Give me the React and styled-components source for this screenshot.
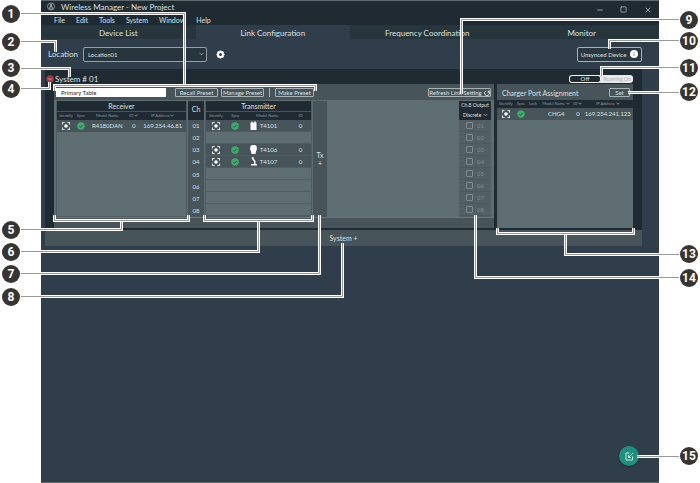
import React from 'react';
import styled, { createGlobalStyle, css } from 'styled-components';
import { ChevronDown, Minus, Square, X } from 'lucide-react';

const colors = {
  body: '#303e4b',
  dark: '#1f2a32',
  tab: '#27363c',
  panel: '#475459',
  field: '#5e6d71',
  line: '#4f5d62',
  edge: '#5c696d',
  text: '#dbe0e2',
  muted: '#909b9f',
  dim: '#7f8c91',
  ok: '#3dab6b',
  danger: '#a23c40',
  accent: '#1f9080',
  badge: '#383431',
};

const GlobalStyle = createGlobalStyle`
  * {
    box-sizing: border-box;
  }

  body {
    margin: 0;
    background: #fff;
    font-family: Lato, 'Noto Sans', sans-serif;
    color: ${colors.text};
  }

  button, input, select {
    font-family: inherit;
    color: inherit;
    margin: 0;
  }
`;

const Page = styled.div`
  position: relative;
  min-height: 100vh;
  display: flex;
  padding: 0 41px;
`;

const Window = styled.main`
  position: relative;
  flex: 1;
  min-width: 0;
  background: ${colors.body};
  border-top: 1px solid ${colors.edge};
  border-bottom: 1px solid ${colors.edge};
`;

const TitleBar = styled.header`
  display: flex;
  align-items: flex-start;
  height: 13px;
  padding: 1px 7px 0 6px;
  background: ${colors.dark};
`;

const AppTitle = styled.h1`
  flex: 1;
  margin: 0 0 0 6px;
  font-size: 8px;
  line-height: 10px;
  font-weight: 400;
`;

const WindowControls = styled.div`
  display: flex;
  align-items: flex-end;
  gap: 16px;
  height: 12px;
`;

const WindowButton = styled.button`
  display: flex;
  width: 8px;
  height: 8px;
  padding: 0;
  border: 0;
  background: none;
`;

const MenuBar = styled.nav`
  display: flex;
  gap: 11px;
  height: 11px;
  padding-left: 13px;
  background: ${colors.dark};
`;

const MenuItem = styled.a`
  font-size: 7px;
  line-height: 12px;
  color: inherit;
  text-decoration: none;
`;

const Tabs = styled.nav`
  display: grid;
  grid-template-columns: repeat(4, 1fr);
  background: ${colors.tab};
`;

const Tab = styled.a`
  height: 14px;
  font-size: 8px;
  line-height: 16px;
  text-align: center;
  color: inherit;
  text-decoration: none;
  background: ${({ $active }) => ($active ? colors.body : 'transparent')};
`;

const LocationBar = styled.div`
  display: flex;
  align-items: center;
  height: 30px;
  padding: 0 17px 0 7px;
`;

const LocationLabel = styled.label`
  width: 35px;
  font-size: 8px;
`;

const SelectWrap = styled.div`
  position: relative;
  width: ${({ $width }) => $width};

  svg {
    position: absolute;
    right: ${({ $inset }) => $inset};
    top: 50%;
    transform: translateY(-50%);
    pointer-events: none;
  }
`;

const LocationSelect = styled.select`
  display: block;
  appearance: none;
  width: 100%;
  height: 15px;
  padding: 0 4px;
  font-size: 6px;
  background: ${colors.tab};
  border: 1px solid #97a1a5;
  border-radius: 2px;
`;

const IconButton = styled.button`
  display: flex;
  margin-left: 9px;
  padding: 0;
  border: 0;
  background: none;
`;

const OutlineButton = styled.button`
  display: flex;
  align-items: center;
  justify-content: center;
  gap: 2px;
  width: ${({ $width }) => $width};
  height: 9px;
  padding: 0;
  font-size: 6px;
  line-height: 7px;
  white-space: nowrap;
  background: transparent;
  border: 1px solid #a9b1b4;
  border-radius: 1px;
  ${({ $tall }) =>
    $tall &&
    css`
      gap: 4px;
      height: 15px;
      margin-left: auto;
      background: #293740;
      border-radius: 2px;
    `}
`;

const System = styled.section`
  margin: 0 17px 0 4px;
  padding: 0 9px 2px;
  background: ${colors.dark};
`;

const SystemHeader = styled.div`
  display: flex;
  align-items: center;
  height: 15px;
  margin-left: -9px;
  padding-top: 5px;
`;

const SystemName = styled.h2`
  flex: 1;
  margin: 0;
  font-size: 8px;
  line-height: 10px;
  font-weight: 400;
`;

const RemoveButton = styled.button`
  display: flex;
  width: 10px;
  padding: 0 1px;
  border: 0;
  background: none;
`;

const Switch = styled.button`
  display: grid;
  grid-template-columns: 1fr 1fr;
  width: 64px;
  height: 8px;
  padding: 0;
  overflow: hidden;
  font-size: 6px;
  line-height: 6px;
  white-space: nowrap;
  border: 0;
  border-radius: 3px;
  background: #e9e8e8;
  color: #b0b0b0;
`;

const SwitchOff = styled.span`
  border: 1px solid #f1f1f1;
  border-radius: 3px;
  background: ${colors.dark};
  color: ${colors.text};
`;

const SwitchOn = styled.span`
  font-size: 5px;
  line-height: 8px;
`;

const Panels = styled.div`
  display: flex;
  gap: 3px;
  height: 144px;
`;

const LinkPanel = styled.div`
  flex: 1;
  min-width: 0;
  background: ${colors.panel};
`;

const Toolbar = styled.div`
  display: flex;
  align-items: center;
  gap: 3px;
  height: 16px;
  padding: 1px 3px 0 2px;
`;

const TableName = styled.input`
  width: 110px;
  height: 9px;
  margin-right: 6px;
  padding: 0 5px;
  border: 0;
  font-size: 6px;
  background: #fff;
  color: #222;
`;

const Divider = styled.span`
  width: 1px;
  height: 9px;
  margin: 0 2px;
  background: #a9b1b4;
`;

const Spacer = styled.span`
  flex: 1;
`;

const LinkGrid = styled.div`
  display: grid;
  grid-template-columns: 131fr 16px 107fr 14px 130fr 32px;
  gap: 1px;
  height: 118px;
  padding: 1px 3px 1px 2px;
  background: ${colors.field};
  border-bottom: 1px solid #6b797d;
`;

const DataTable = styled.table`
  width: 100%;
  table-layout: fixed;
  border-collapse: separate;
  border-spacing: 0;
  text-align: center;
  font-size: 6px;
  line-height: 8px;

  th, td {
    padding: 0;
    white-space: nowrap;
  }

  svg {
    vertical-align: middle;
  }
`;

const GroupHead = styled.th`
  height: 11px;
  font-size: 7px;
  font-weight: 400;
  background: ${colors.dark};
  border-bottom: 1px solid ${colors.panel};
`;

const ColumnHead = styled.th`
  height: 8px;
  font-size: 4px;
  line-height: 6px;
  font-weight: 400;
  color: ${colors.muted};
  background: ${colors.dark};
`;

const Row = styled.tr`
  height: 12px;
  background: ${({ $empty }) => ($empty ? 'transparent' : colors.panel)};

  td {
    border-bottom: ${({ $ruled }) => ($ruled ? `1px solid ${colors.line}` : '0')};
  }
`;

const ModelCell = styled.div`
  display: flex;
  align-items: center;
  gap: 3px;
  padding-left: 5px;
`;

const Frame = styled.div`
  border: solid ${colors.line};
  border-width: 0 1px 1px;
`;

const ChannelTable = styled(DataTable)`
  background: ${colors.panel};
`;

const ChannelHead = styled.th`
  && {
    height: 19px;
    padding-bottom: 4px;
    font-size: 7px;
    font-weight: 400;
    background: ${colors.dark};
  }
`;

const AddTransmitter = styled.button`
  display: flex;
  flex-direction: column;
  align-items: center;
  justify-content: center;
  padding: 0;
  border: 0;
  font-size: 7px;
  line-height: 8px;
  background: ${colors.panel};
`;

const Output = styled.div`
  background: #526065;
`;

const OutputHead = styled.div`
  height: 19px;
  text-align: center;
  font-size: 5px;
  line-height: 9px;
  white-space: nowrap;
  background: ${colors.dark};
`;

const OutputSelect = styled.select`
  display: block;
  appearance: none;
  width: 100%;
  height: 9px;
  padding: 0 4px;
  font-size: 5px;
  border: 0;
  background: transparent;
`;

const OutputRow = styled.label`
  display: flex;
  align-items: center;
  gap: 4px;
  height: 12px;
  padding-left: 7px;
  font-size: 6px;
  color: ${colors.dim};
  border-bottom: 1px solid #4b595e;

  input {
    appearance: none;
    width: 7px;
    height: 7px;
    border: 1px solid ${colors.dim};
    border-radius: 1px;
  }
`;

const ChargerPanel = styled.section`
  width: 136px;
  background: ${colors.field};
`;

const ChargerHeader = styled.div`
  display: flex;
  align-items: center;
  justify-content: space-between;
  height: 16px;
  padding: 1px 3px 0 5px;
  background: ${colors.panel};
`;

const ChargerTitle = styled.h3`
  margin: 0;
  font-size: 7px;
  font-weight: 400;
`;

const AddSystem = styled.button`
  display: block;
  width: calc(100% - 21px);
  height: 16px;
  margin-left: 4px;
  padding: 0;
  border: 0;
  font-size: 7px;
  text-align: center;
  background: ${colors.panel};
`;

const EditFab = styled.button`
  position: absolute;
  right: 20px;
  bottom: 16px;
  display: flex;
  align-items: center;
  justify-content: center;
  width: 20px;
  height: 20px;
  padding: 0;
  border: 0;
  border-radius: 50%;
  background: ${colors.accent};
  box-shadow: 0 1px 2px rgba(0, 0, 0, 0.4);
`;

const Leaders = styled.svg`
  position: absolute;
  top: 0;
  left: 0;
  pointer-events: none;
`;

const Badge = styled.span`
  position: absolute;
  top: ${({ $y }) => $y - 9}px;
  ${({ $side }) => $side}: 2px;
  width: 18px;
  height: 18px;
  border-radius: 50%;
  background: ${colors.badge};
  color: #fff;
  font: 700 12px/18px Roboto, sans-serif;
  text-align: center;
`;

const menus = ['File', 'Edit', 'Tools', 'System', 'Window', 'Help'];
const tabs = ['Device List', 'Link Configuration', 'Frequency Coordination', 'Monitor'];
const channels = ['01', '02', '03', '04', '05', '06', '07', '08'];

const transmitters = {
  '01': { model: 'T4101', kind: 'bodypack' },
  '03': { model: 'T4106', kind: 'boundary' },
  '04': { model: 'T4107', kind: 'gooseneck' },
};

const callouts = [
  { n: 1, y: 14, side: 'left', path: 'M21 13.5H184.5V85', bracket: 'M54.5 91V85.5H315.5V91' },
  { n: 2, y: 42, side: 'left', path: 'M21 41.5H55.5V52' },
  { n: 3, y: 68, side: 'left', path: 'M21 68.5H69.5V77' },
  { n: 4, y: 89, side: 'left', path: 'M21 88.5H49.5V82' },
  { n: 5, y: 230, side: 'left', path: 'M21 229.5H121.5V221', bracket: 'M54.5 215V220.5H188.5V215' },
  { n: 6, y: 252, side: 'left', path: 'M21 251.5H258.5V221', bracket: 'M204.5 215V220.5H312.5V215' },
  { n: 7, y: 274, side: 'left', path: 'M21 273.5H319.5V215' },
  { n: 8, y: 297, side: 'left', path: 'M21 296.5H342.5V243' },
  { n: 9, y: 20, side: 'right', path: 'M679 19.5H461.5V94' },
  { n: 10, y: 41, side: 'right', path: 'M679 40.5H609.5V49' },
  { n: 11, y: 68, side: 'right', path: 'M679 67.5H601.5V76' },
  { n: 12, y: 92, side: 'right', path: 'M679 92.5H628' },
  { n: 13, y: 254, side: 'right', path: 'M679 254.5H565.5V234', bracket: 'M497.5 228V233.5H633.5V228' },
  { n: 14, y: 278, side: 'right', path: 'M679 277.5H475.5V215' },
  { n: 15, y: 456, side: 'right', path: 'M679 456.5H637' },
];

const Logo = () => (
  <svg width="8" height="9" viewBox="0 0 16 18" fill="none" stroke="#aeb7ba" strokeWidth="1.4">
    <circle cx="8" cy="9" r="7" />
    <path d="M4.5 14 8 4l3.5 10M8 4v12M6 10.5l2-2 2 2" />
  </svg>
);

const Gear = () => (
  <svg width="9" height="9" viewBox="0 0 18 18">
    <circle cx="9" cy="9" r="5" fill="none" stroke="#fff" strokeWidth="4" />
    <path
      d="M9 1v3M9 14v3M1 9h3M14 9h3M3.3 3.3l2.2 2.2M12.5 12.5l2.2 2.2M3.3 14.7l2.2-2.2M12.5 5.5l2.2-2.2"
      stroke="#fff"
      strokeWidth="3.4"
    />
  </svg>
);

const Info = () => (
  <svg width="8" height="8" viewBox="0 0 16 16">
    <circle cx="8" cy="8" r="8" fill="#fff" />
    <path d="M8 4v2M8 7v5" stroke="#8b969d" strokeWidth="2" />
  </svg>
);

const Refresh = () => (
  <svg width="6" height="6" viewBox="0 0 12 12" fill="none" stroke="#e3e8ea" strokeWidth="1.8">
    <path d="M3.5 2A5 5 0 1 0 9 2.2M8.5 6V2.2H12" />
  </svg>
);

const Identify = () => (
  <svg width="8" height="8" viewBox="0 0 16 16">
    <path
      d="M1 5V1h4M11 1h4v4M15 11v4h-4M5 15H1v-4"
      fill="none"
      stroke="#fff"
      strokeWidth="2"
    />
    <circle cx="8" cy="8" r="3.6" fill="#fff" />
  </svg>
);

const Synced = () => (
  <svg width="8" height="8" viewBox="0 0 16 16">
    <circle cx="8" cy="8" r="7.5" fill={colors.ok} />
    <path d="m4.5 8 2.5 2.7 4.5-5" fill="none" stroke="#2f5245" strokeWidth="1.8" />
  </svg>
);

const SortMark = () => (
  <svg width="4" height="3" viewBox="0 0 10 6" fill="none" stroke="#a5afb2" strokeWidth="1.8">
    <path d="m1 1 4 4 4-4" />
  </svg>
);

const deviceShapes = {
  bodypack: <path d="M3 1h2v2h4V0h2v3h2v15H1V3h2z" />,
  boundary: <path d="M4 0h6l3 2 1 6-2 5-1 5H3l-1-5-2-5 1-6z" />,
  gooseneck: <path d="M3 1l5-1-1 3 4 5v6h3v3H2v-3h6V9L4 4z" />,
};

const Device = ({ kind }) => (
  <svg width="7" height="9" viewBox="0 0 14 18" fill="#fff">
    {deviceShapes[kind]}
  </svg>
);

function ReceiverTable() {
  return (
    <Frame>
      <DataTable>
        <colgroup>
          <col width="14%" />
          <col width="9%" />
          <col width="32%" />
          <col width="9%" />
          <col width="36%" />
        </colgroup>
        <thead>
          <tr>
            <GroupHead colSpan={5}>Receiver</GroupHead>
          </tr>
          <tr>
            <ColumnHead>Identify</ColumnHead>
            <ColumnHead>Sync</ColumnHead>
            <ColumnHead>Model Name</ColumnHead>
            <ColumnHead>ID <SortMark /></ColumnHead>
            <ColumnHead>IP Address <SortMark /></ColumnHead>
          </tr>
        </thead>
        <tbody>
          <Row>
            <td><Identify /></td>
            <td><Synced /></td>
            <td>R4180DAN</td>
            <td>0</td>
            <td>169.254.46.81</td>
          </Row>
        </tbody>
      </DataTable>
    </Frame>
  );
}

function TransmitterTable() {
  return (
    <Frame>
      <DataTable>
        <colgroup>
          <col width="19%" />
          <col width="18%" />
          <col width="43%" />
          <col width="20%" />
        </colgroup>
        <thead>
          <tr>
            <GroupHead colSpan={4}>Transmitter</GroupHead>
          </tr>
          <tr>
            <ColumnHead>Identify</ColumnHead>
            <ColumnHead>Sync</ColumnHead>
            <ColumnHead>Model Name</ColumnHead>
            <ColumnHead>ID</ColumnHead>
          </tr>
        </thead>
        <tbody>
          {channels.map((ch) => {
            const device = transmitters[ch];
            if (!device) {
              return (
                <Row key={ch} $empty $ruled>
                  <td colSpan={4} />
                </Row>
              );
            }
            return (
              <Row key={ch} $ruled>
                <td><Identify /></td>
                <td><Synced /></td>
                <td>
                  <ModelCell>
                    <Device kind={device.kind} />
                    {device.model}
                  </ModelCell>
                </td>
                <td>0</td>
              </Row>
            );
          })}
        </tbody>
      </DataTable>
    </Frame>
  );
}

function ChargerTable() {
  return (
    <DataTable>
      <colgroup>
        <col width="13%" />
        <col width="9%" />
        <col width="9%" />
        <col width="25%" />
        <col width="7%" />
        <col width="37%" />
      </colgroup>
      <thead>
        <tr>
          <ColumnHead>Identify</ColumnHead>
          <ColumnHead>Sync</ColumnHead>
          <ColumnHead>Lock</ColumnHead>
          <ColumnHead>Model Name <SortMark /></ColumnHead>
          <ColumnHead>ID <SortMark /></ColumnHead>
          <ColumnHead>IP Address <SortMark /></ColumnHead>
        </tr>
      </thead>
      <tbody>
        <Row>
          <td><Identify /></td>
          <td><Synced /></td>
          <td />
          <td>CHG4</td>
          <td>0</td>
          <td>169.254.241.123</td>
        </Row>
      </tbody>
    </DataTable>
  );
}

function Callouts() {
  return (
    <>
      <Leaders width="700" height="483" fill="none">
        {callouts.map(({ n, path, bracket }) => (
          <g key={n}>
            <path d={path} stroke="#fff" strokeWidth="3" />
            <path d={path} stroke="#9a9898" />
            {bracket && <path d={bracket} stroke="#fff" strokeWidth="3" />}
            {bracket && <path d={bracket} stroke="#9a9898" />}
          </g>
        ))}
      </Leaders>
      {callouts.map(({ n, y, side }) => (
        <Badge key={n} $y={y} $side={side}>{n}</Badge>
      ))}
    </>
  );
}

function App() {
  return (
    <Page>
      <GlobalStyle />
      <Window>
        <TitleBar>
          <Logo />
          <AppTitle>Wireless Manager - New Project</AppTitle>
          <WindowControls>
            <WindowButton aria-label="Minimize"><Minus size={8} /></WindowButton>
            <WindowButton aria-label="Maximize"><Square size={7} /></WindowButton>
            <WindowButton aria-label="Close"><X size={8} /></WindowButton>
          </WindowControls>
        </TitleBar>
        <MenuBar>
          {menus.map((name) => (
            <MenuItem key={name} href="#">{name}</MenuItem>
          ))}
        </MenuBar>
        <Tabs>
          {tabs.map((name) => (
            <Tab key={name} href="#" $active={name === 'Link Configuration'}>{name}</Tab>
          ))}
        </Tabs>

        <LocationBar>
          <LocationLabel htmlFor="location">Location</LocationLabel>
          <SelectWrap $width="124px" $inset="2px">
            <LocationSelect id="location">
              <option>Location01</option>
            </LocationSelect>
            <ChevronDown size={7} />
          </SelectWrap>
          <IconButton aria-label="Location settings"><Gear /></IconButton>
          <OutlineButton $tall $width="65px">
            Unsynced Device <Info />
          </OutlineButton>
        </LocationBar>

        <System>
          <SystemHeader>
            <RemoveButton aria-label="Remove system">
              <svg width="8" height="8" viewBox="0 0 16 16">
                <circle cx="8" cy="8" r="7.5" fill={colors.danger} />
                <path d="M4.5 8h7" stroke="#d9a0a2" strokeWidth="1.6" />
              </svg>
            </RemoveButton>
            <SystemName>System # 01</SystemName>
            <Switch role="switch" aria-checked="false">
              <SwitchOff>Off</SwitchOff>
              <SwitchOn>Roaming On</SwitchOn>
            </Switch>
          </SystemHeader>

          <Panels>
            <LinkPanel>
              <Toolbar>
                <TableName aria-label="Table name" defaultValue="Primary Table" />
                <OutlineButton $width="43px">Recall Preset</OutlineButton>
                <OutlineButton $width="43px">Manage Preset</OutlineButton>
                <Divider />
                <OutlineButton $width="39px">Make Preset</OutlineButton>
                <Spacer />
                <OutlineButton $width="63px">
                  Refresh Link Setting <Refresh />
                </OutlineButton>
              </Toolbar>
              <LinkGrid>
                <ReceiverTable />
                <ChannelTable>
                  <thead>
                    <tr>
                      <ChannelHead>Ch</ChannelHead>
                    </tr>
                  </thead>
                  <tbody>
                    {channels.map((ch) => (
                      <Row key={ch}>
                        <td>{ch}</td>
                      </Row>
                    ))}
                  </tbody>
                </ChannelTable>
                <TransmitterTable />
                <AddTransmitter>
                  <span>Tx</span>
                  <span>+</span>
                </AddTransmitter>
                <div />
                <Output>
                  <OutputHead>
                    Ch.8 Output
                    <SelectWrap $width="100%" $inset="2px">
                      <OutputSelect aria-label="Output mode">
                        <option>Discrete</option>
                      </OutputSelect>
                      <ChevronDown size={7} />
                    </SelectWrap>
                  </OutputHead>
                  {channels.map((ch) => (
                    <OutputRow key={ch}>
                      <input type="checkbox" disabled />
                      {ch}
                    </OutputRow>
                  ))}
                </Output>
              </LinkGrid>
            </LinkPanel>

            <ChargerPanel>
              <ChargerHeader>
                <ChargerTitle>Charger Port Assignment</ChargerTitle>
                <OutlineButton $width="21px">Set</OutlineButton>
              </ChargerHeader>
              <ChargerTable />
            </ChargerPanel>
          </Panels>
        </System>
        <AddSystem>System +</AddSystem>

        <EditFab aria-label="Edit">
          <svg width="9" height="9" viewBox="0 0 18 18" fill="none" stroke="#d9f1ed" strokeWidth="1.8">
            <path d="M9 2H2v14h13V9M16 2 7 11M7 6v5h5" />
          </svg>
        </EditFab>
      </Window>
      <Callouts />
    </Page>
  );
}

export default App;
